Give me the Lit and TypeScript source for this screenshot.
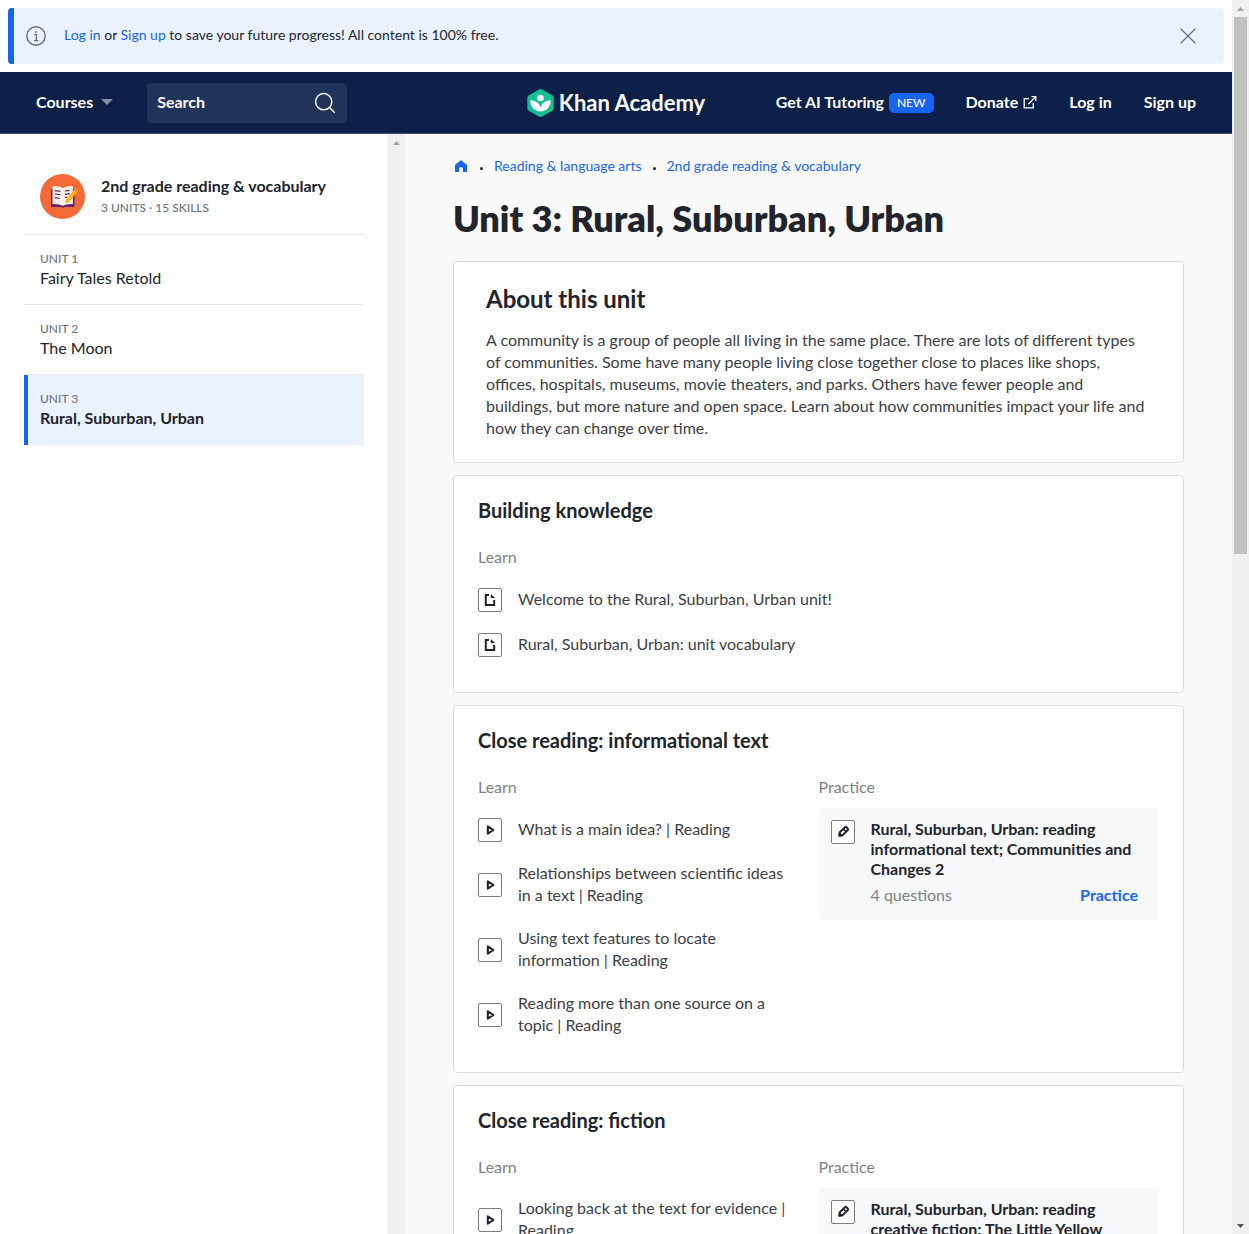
import { LitElement, html, css, svg, nothing, TemplateResult } from "lit";
import { customElement } from "lit/decorators.js";

interface Practice {
  title: string;
  questions: number;
}
interface Lesson {
  title: string;
  kind: "article" | "video";
  learn: string[];
  practice?: Practice;
}

const UNITS = [
  { label: "Unit 1", title: "Fairy Tales Retold" },
  { label: "Unit 2", title: "The Moon" },
  { label: "Unit 3", title: "Rural, Suburban, Urban", current: true },
];

const LESSONS: Lesson[] = [
  {
    title: "Building knowledge",
    kind: "article",
    learn: ["Welcome to the Rural, Suburban, Urban unit!", "Rural, Suburban, Urban: unit vocabulary"],
  },
  {
    title: "Close reading: informational text",
    kind: "video",
    learn: [
      "What is a main idea? | Reading",
      "Relationships between scientific ideas in a text | Reading",
      "Using text features to locate information | Reading",
      "Reading more than one source on a topic | Reading",
    ],
    practice: {
      title: "Rural, Suburban, Urban: reading informational text; Communities and Changes 2",
      questions: 4,
    },
  },
  {
    title: "Close reading: fiction",
    kind: "video",
    learn: ["Looking back at the text for evidence | Reading"],
    practice: {
      title: "Rural, Suburban, Urban: reading creative fiction; The Little Yellow House",
      questions: 4,
    },
  },
];

const GLYPHS = {
  article: svg`<path d="M11 7H7.800v10h8.400v-5" fill="none" stroke="#21242c" stroke-width="2"/><path d="M12.800 6v4h4.200z" fill="#21242c"/>`,
  video: svg`<path d="M9.800 8.300v7.400l5.700-3.700z" fill="none" stroke="#21242c" stroke-width="2" stroke-linejoin="round"/>`,
  exercise: svg`<g transform="rotate(45 12 12)"><path d="M10 7.200a1 1 0 0 1 1-1h2a1 1 0 0 1 1 1v7.600l-2 2.600-2-2.600z" fill="none" stroke="#21242c" stroke-width="2" stroke-linejoin="round"/><path d="M10 9.600h4" stroke="#21242c" stroke-width="1.600"/><path d="M10 14.500h4l-2 3z" fill="#21242c"/></g>`,
};

const tile = (kind: keyof typeof GLYPHS) => html`
  <svg class="tile" width="24" height="24" viewBox="0 0 24 24" aria-hidden="true">
    <rect x=".5" y=".5" width="23" height="23" rx="1.500" fill="#fff" stroke="#7b7d83" />
    ${GLYPHS[kind]}
  </svg>
`;

@customElement("lesson-card")
class LessonCard extends LitElement {
  static properties = { lesson: { attribute: false } };
  declare lesson: Lesson;

  static styles = css`
    :host {
      display: block;
      background: #fff;
      border: 1px solid #dcdddf;
      border-radius: 4px;
      padding: 22px 24px 35px;
    }
    .title {
      margin: 0 0 24px;
      font-size: 20px;
      line-height: 24px;
      font-weight: 700;
    }
    .columns {
      display: grid;
      grid-template-columns: 1fr 1fr;
    }
    .label {
      margin: 0;
      font-size: 16px;
      line-height: 22px;
      font-weight: 400;
      color: #7f8186;
    }
    .items {
      list-style: none;
      margin: 20px 0 0;
      padding: 0 24px 0 0;
      display: flex;
      flex-direction: column;
      gap: 21px;
    }
    .wide {
      grid-column: 1 / -1;
    }
    .item {
      display: flex;
      align-items: center;
      gap: 16px;
      font-size: 16px;
      line-height: 22px;
      color: #3b3e46;
      text-decoration: none;
    }
    .caption {
      margin: -1px 0 1px;
    }
    .tile {
      display: block;
      flex: none;
    }
    .practice {
      display: flex;
      align-items: flex-start;
      gap: 16px;
      margin-top: 10px;
      padding: 12px 21px 13px 12px;
      border-radius: 4px;
      background: #f7f8fa;
    }
    .body {
      flex: 1;
      margin: -1px 0 1px;
    }
    .name {
      margin: 0 0 5px;
      font-size: 16px;
      line-height: 20px;
      font-weight: 700;
    }
    .foot {
      display: flex;
      justify-content: space-between;
      font-size: 16px;
      line-height: 22px;
      color: #7f8186;
    }
    .go {
      color: #1865f2;
      font-weight: 700;
      text-decoration: none;
    }
  `;

  render() {
    const { title, kind, learn, practice } = this.lesson;
    return html`
      <h2 class="title">${title}</h2>
      <div class="columns">
        <section class=${practice ? "" : "wide"}>
          <h3 class="label">Learn</h3>
          <ul class="items">
            ${learn.map(
              (t) => html`<li><a class="item" href="#">${tile(kind)}<span class="caption">${t}</span></a></li>`
            )}
          </ul>
        </section>
        ${practice
          ? html`<section>
              <h3 class="label">Practice</h3>
              <div class="practice">
                ${tile("exercise")}
                <div class="body">
                  <h4 class="name">${practice.title}</h4>
                  <div class="foot">
                    <span>${practice.questions} questions</span>
                    <a class="go" href="#">Practice</a>
                  </div>
                </div>
              </div>
            </section>`
          : nothing}
      </div>
    `;
  }
}

@customElement("app-root")
class AppRoot extends LitElement {
  static styles = css`
    :host {
      display: flex;
      height: 100vh;
      overflow: hidden;
      font-family: Lato, "Liberation Sans", sans-serif;
      font-size: 16px;
      color: #21242c;
      background: #fff;
    }
    a {
      text-decoration: none;
      color: inherit;
    }
    button {
      font: inherit;
      color: inherit;
      background: none;
      border: 0;
      padding: 0;
      cursor: pointer;
    }
    svg {
      display: block;
      flex: none;
    }
    .page {
      flex: 1;
      min-width: 0;
      display: flex;
      flex-direction: column;
    }
    .scrollbar {
      flex: none;
      width: 17px;
      box-sizing: border-box;
      display: flex;
      flex-direction: column;
      align-items: center;
      padding: 7px 0 6px;
      background: #f0f0f0;
    }
    .thumb {
      width: 13px;
      height: 44%;
      margin: 6px 0 auto;
      background: #c1c1c1;
    }
    .banner {
      display: flex;
      align-items: center;
      gap: 18px;
      flex: none;
      margin: 8px;
      min-height: 56px;
      padding: 0 26px 0 12px;
      border-left: 6px solid #1865f2;
      border-radius: 4px;
      background: #ebf2ff;
      font-size: 14px;
      line-height: 20px;
    }
    .message {
      flex: 1;
      margin: 0;
      padding-bottom: 2px;
    }
    .link {
      color: #1865f2;
    }
    .header {
      flex: none;
      display: grid;
      grid-template-columns: 1fr auto 1fr;
      align-items: center;
      padding: 11px 36px 10px;
      background: #0c2049;
      border-bottom: 1px solid #3d4d6d;
      color: #fff;
      font-weight: 700;
      line-height: 20px;
    }
    .start,
    .end,
    .brand,
    .nav {
      display: flex;
      align-items: center;
    }
    .start {
      gap: 34px;
    }
    .courses {
      display: flex;
      align-items: center;
      gap: 8px;
      padding-bottom: 2px;
      font-weight: 700;
    }
    .search {
      display: flex;
      align-items: center;
      width: 200px;
      height: 40px;
      box-sizing: border-box;
      padding: 0 11px 0 10px;
      border-radius: 4px;
      background: #203358;
    }
    .field {
      flex: 1;
      min-width: 0;
      border: 0;
      padding: 0 0 2px;
      background: none;
      color: #fff;
      font: inherit;
      outline: none;
    }
    .field::placeholder {
      color: #fff;
      opacity: 1;
    }
    .brand {
      gap: 5px;
      font-size: 22px;
      line-height: 28px;
    }
    .end {
      justify-content: flex-end;
      gap: 32px;
      padding-bottom: 2px;
    }
    .nav {
      gap: 5px;
      white-space: nowrap;
    }
    .new {
      margin: 1px 0 -1px;
      padding: 0 8px;
      border-radius: 5px;
      background: #1865f2;
      font-size: 12px;
      line-height: 20px;
      font-weight: 500;
    }
    .content {
      flex: 1;
      min-height: 0;
      display: flex;
    }
    .side {
      flex: none;
      width: 340px;
      padding: 24px;
    }
    .course {
      display: flex;
      align-items: center;
      gap: 16px;
      padding: 16px 16px 15px;
    }
    .coursename {
      margin: 0 0 2px;
      font-size: 16px;
      line-height: 20px;
      font-weight: 700;
    }
    .meta {
      margin: 0;
      font-size: 12px;
      line-height: 20px;
      font-weight: 500;
      color: #717379;
      text-transform: uppercase;
    }
    .unit {
      display: block;
      height: 69px;
      box-sizing: border-box;
      padding: 15px 16px;
      margin-top: 1px;
      box-shadow: 0 -1px #e9eaeb;
      line-height: 20px;
    }
    .unit .meta {
      line-height: 18px;
    }
    .current {
      height: 70px;
      padding-left: 12px;
      border-left: 4px solid #1865f2;
      background: #ebf2ff;
    }
    .current .unitname {
      font-weight: 700;
    }
    .track {
      flex: none;
      width: 17px;
      box-sizing: border-box;
      display: flex;
      justify-content: center;
      padding-top: 7px;
      background: #f0f0f0;
    }
    .main {
      flex: 1;
      min-width: 0;
      padding: 22px 48px 0;
      overflow: hidden;
      background: #fafafa;
    }
    .crumbs {
      display: flex;
      align-items: center;
      gap: 11px;
      padding-left: 2px;
      color: #1865f2;
      font-size: 14px;
      line-height: 20px;
    }
    .home {
      margin-right: 2px;
    }
    .dot {
      width: 3px;
      height: 3px;
      margin-top: 4px;
      border-radius: 50%;
      background: #21242c;
    }
    .heading {
      margin: 20px 0 21px;
      font-size: 36px;
      line-height: 44px;
      font-weight: 800;
    }
    .cards {
      display: flex;
      flex-direction: column;
      gap: 12px;
    }
    .about {
      padding: 23px 32px;
      border: 1px solid #dcdddf;
      border-radius: 4px;
      background: #fff;
    }
    .abouttitle {
      margin: 0 0 16px;
      font-size: 24px;
      line-height: 28px;
      font-weight: 700;
    }
    .text {
      margin: 0;
      line-height: 22px;
      color: #3b3e46;
    }
  `;

  private arrow(up: boolean, color: string): TemplateResult {
    return html`<svg width="7" height="4" viewBox="0 0 7 4" aria-hidden="true">
      <path d=${up ? "M0 4h7L3.5 0z" : "M0 0h7L3.5 4z"} fill=${color} />
    </svg>`;
  }

  private banner() {
    return html`<div class="banner">
      <svg width="20" height="20" viewBox="0 0 20 20" fill="none" stroke="#6a6e78" aria-hidden="true">
        <circle cx="10" cy="10" r="9.2" stroke-width="1.4" />
        <path d="M8.3 8.7h2v6M8 14.7h4.4" stroke-width="1.3" />
        <circle cx="9.8" cy="5.9" r="1" fill="#6a6e78" stroke="none" />
      </svg>
      <p class="message">
        <a class="link" href="#">Log in</a> or <a class="link" href="#">Sign up</a> to save your future progress! All
        content is 100% free.
      </p>
      <button aria-label="Dismiss">
        <svg width="20" height="20" viewBox="0 0 20 20" fill="none" stroke="#5f636e" stroke-width="1.3">
          <path d="M2.6 2.6l14.8 14.8M17.4 2.6L2.6 17.4" />
        </svg>
      </button>
    </div>`;
  }

  private header() {
    return html`<header class="header">
      <div class="start">
        <button class="courses">
          Courses
          <svg width="12" height="6" viewBox="0 0 12 6"><path d="M0 0h12L6 6z" fill="#858fa4" /></svg>
        </button>
        <label class="search">
          <input class="field" type="text" placeholder="Search" aria-label="Search" />
          <svg width="22" height="22" viewBox="0 0 22 22" fill="none" stroke="#fff" stroke-width="1.5">
            <circle cx="9.7" cy="9.7" r="8.1" />
            <path d="M15.5 15.5l5.2 5.2" />
          </svg>
        </label>
      </div>
      <a class="brand" href="#">
        <svg width="27" height="28" viewBox="0 0 27 28" aria-hidden="true">
          <path
            d="M11.8.5Q13.5-.4 15.2.5L25 6.2Q26.7 7.2 26.7 9.1V18.9Q26.7 20.8 25 21.8L15.2 27.5Q13.5 28.4 11.8 27.5L2 21.8Q.3 20.8.3 18.9V9.1Q.3 7.2 2 6.2Z"
            fill="#14bf96"
          />
          <circle cx="13.5" cy="9" r="3.2" fill="#fff" />
          <path
            d="M3.3 11.3C8.8 11.4 12.7 14.8 13.5 18.6C14.3 14.8 18.2 11.4 23.7 11.3C23.8 18 19.6 22.4 13.5 22.4S3.2 18 3.3 11.3Z"
            fill="#fff"
          />
        </svg>
        Khan Academy
      </a>
      <nav class="end">
        <a class="nav" href="#">Get AI Tutoring <span class="new">NEW</span></a>
        <a class="nav" href="#"
          >Donate
          <svg width="14" height="14" viewBox="0 0 14 14" fill="none" stroke="#fff" stroke-width="1.3">
            <path d="M6 3.7H1.2v9.1h9.1V8M8.500 1.700h4.300v4.300M12.600 1.900L5.300 9.200" />
          </svg>
        </a>
        <a class="nav" href="#">Log in</a>
        <a class="nav" href="#">Sign up</a>
      </nav>
    </header>`;
  }

  private side() {
    return html`<nav class="side" aria-label="Course units">
      <a class="course" href="#">
        <svg width="45" height="45" viewBox="0 0 45 45" aria-hidden="true">
          <circle cx="22.5" cy="22.5" r="22.5" fill="#f56b38" />
          <path d="M11 15h23.5v18H25l-2.2.8-2.3-.8H11z" fill="#65216b" />
          <path d="M12.5 12.2q5.8-.6 10.2 1.8 4.4-2.4 10.2-1.8v18q-6-.5-10.2 1.6-4.2-2.1-10.2-1.6z" fill="#f6efe3" />
          <path
            d="M14.8 16.6l5.6.7M14.8 20l5.6.7M14.8 23.7l5 .8M24.8 17l4.8-.7M24.8 20.3l5-.6M24.8 23.5l2.5-.4"
            stroke="#65216b"
            stroke-width="1.2"
          />
          <path d="M24.9 29.5l1.4-4.2 9.2-11.2 3 2.3-9.3 11.3z" fill="#fdb514" />
          <path d="M35.5 14.1l3 2.3-1.6 1.9-3-2.3z" fill="#f58d16" />
        </svg>
        <div>
          <h2 class="coursename">2nd grade reading &amp; vocabulary</h2>
          <p class="meta">3 units · 15 skills</p>
        </div>
      </a>
      ${UNITS.map(
        (u) => html`<a class="unit ${u.current ? "current" : ""}" href="#">
          <p class="meta">${u.label}</p>
          <span class="unitname">${u.title}</span>
        </a>`
      )}
    </nav>`;
  }

  render() {
    return html`
      <div class="page">
        ${this.banner()} ${this.header()}
        <div class="content">
          ${this.side()}
          <div class="track">${this.arrow(true, "#a3a3a3")}</div>
          <main class="main">
            <nav class="crumbs" aria-label="Breadcrumb">
              <a class="home" href="#" aria-label="Home">
                <svg width="12" height="12" viewBox="0 0 13 13">
                  <path d="M6.5 0L0 5.5V12.2q0 .8.8.8H4.5V9.500a2 2 0 0 1 4 0V13h3.700q.8 0 .8-.8V5.500z" fill="#1865f2" />
                </svg>
              </a>
              <span class="dot"></span>
              <a href="#">Reading &amp; language arts</a>
              <span class="dot"></span>
              <a href="#">2nd grade reading &amp; vocabulary</a>
            </nav>
            <h1 class="heading">Unit 3: Rural, Suburban, Urban</h1>
            <div class="cards">
              <section class="about">
                <h2 class="abouttitle">About this unit</h2>
                <p class="text">
                  A community is a group of people all living in the same place. There are lots of different types of
                  communities. Some have many people living close together close to places like shops, offices,
                  hospitals, museums, movie theaters, and parks. Others have fewer people and buildings, but more nature
                  and open space. Learn about how communities impact your life and how they can change over time.
                </p>
              </section>
              ${LESSONS.map((l) => html`<lesson-card .lesson=${l}></lesson-card>`)}
            </div>
          </main>
        </div>
      </div>
      <div class="scrollbar">
        ${this.arrow(true, "#a3a3a3")}
        <div class="thumb"></div>
        ${this.arrow(false, "#505050")}
      </div>
    `;
  }
}
